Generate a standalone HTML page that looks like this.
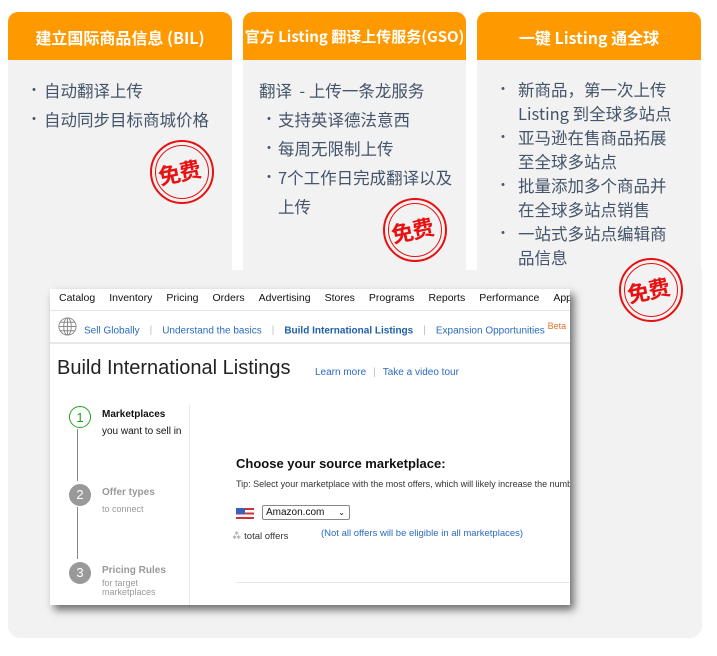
<!DOCTYPE html>
<html><head><meta charset="utf-8"><style>
*{margin:0;padding:0;box-sizing:border-box}
body{width:717px;height:656px;background:#fff;position:relative;overflow:hidden;font-family:"Liberation Sans","Noto Sans CJK SC",sans-serif}
.panel{position:absolute;left:8px;top:270px;width:694px;height:368px;background:#f2f2f2;border-radius:0 0 12px 12px}
.card{position:absolute;top:12px;height:626px;background:#f2f2f2;border-radius:10px 10px 12px 12px;overflow:hidden}
.hd{height:48px;background:#ff9900;color:#fff;font-size:16px;font-weight:bold;text-align:center;line-height:50px;white-space:nowrap;font-family:"Noto Sans CJK SC",sans-serif}
.bd{color:#44546a;font-size:16.5px;line-height:24px;font-family:"Noto Sans CJK SC",sans-serif}
.li{position:relative;padding-left:36px}
.li:before{content:"•";position:absolute;left:19px;font-size:14px}
.stamp{position:absolute;width:64px;height:64px;border:2px solid #e81010;border-radius:50%;}
.stamp:after{content:"";position:absolute;left:3px;top:3px;right:3px;bottom:3px;border:1px solid #e81010;border-radius:50%}
.stamp span{position:absolute;left:6px;top:14px;color:#e81010;font-size:22px;font-weight:bold;transform:rotate(-12deg);font-family:"Noto Sans CJK SC",sans-serif;letter-spacing:-1px}
.shot{position:absolute;left:50px;top:289px;width:520px;height:316px;background:#fff;box-shadow:4px 5px 8px rgba(0,0,0,.55);overflow:hidden;font-size:11px;color:#111}
.nav{height:22px;border-bottom:1px solid #e3e3e3;white-space:nowrap;padding-left:9px;line-height:18px;font-size:10.5px}
.nav span{margin-right:14px}
.sub{height:33px;border-bottom:2px solid #e8e8e8;white-space:nowrap;color:#2b6bc0;font-size:10px;line-height:30px;padding-left:34px;position:relative}
.sep{color:#bbb;margin:0 10px}
a{color:#2b6bc0;text-decoration:none}
.circ{position:absolute;left:19px;width:22px;height:22px;border-radius:50%;text-align:center;line-height:22px;font-size:13px}
</style></head><body>
<div class="panel"></div>
<div class="card" style="left:8px;width:224px">
 <div class="hd">建立国际商品信息 (BIL)</div>
 <div class="bd" style="padding-top:18px">
  <div class="li" style="margin-bottom:5px">自动翻译上传</div>
  <div class="li">自动同步目标商城价格</div>
 </div>
 <div class="stamp" style="left:142px;top:128px"><span>免费</span></div>
</div>
<div class="card" style="left:243px;width:223px">
 <div class="hd" style="font-size:15px">官方 Listing 翻译上传服务(GSO)</div>
 <div class="bd" style="padding-top:16px;line-height:29px">
  <div style="padding-left:16px">翻译&nbsp; - 上传一条龙服务</div>
  <div class="li" style="padding-left:35px">支持英译德法意西</div>
  <div class="li" style="padding-left:35px">每周无限制上传</div>
  <div class="li" style="padding-left:35px;white-space:nowrap">7个工作日完成翻译以及<br>上传</div>
 </div>
 <div class="stamp" style="left:140px;top:186px"><span>免费</span></div>
</div>
<div class="card" style="left:477px;width:224px">
 <div class="hd">一键 Listing 通全球</div>
 <div class="bd" style="padding-top:17px;padding-right:20px">
  <div class="li" style="padding-left:41px">新商品，第一次上传Listing 到全球多站点</div>
  <div class="li" style="padding-left:41px">亚马逊在售商品拓展至全球多站点</div>
  <div class="li" style="padding-left:41px">批量添加多个商品并在全球多站点销售</div>
  <div class="li" style="padding-left:41px">一站式多站点编辑商品信息</div>
 </div>
 <div class="stamp" style="left:142px;top:246px"><span>免费</span></div>
</div>
<div class="shot">
 <div class="nav"><span>Catalog</span><span>Inventory</span><span>Pricing</span><span>Orders</span><span>Advertising</span><span>Stores</span><span>Programs</span><span>Reports</span><span>Performance</span><span>Apps</span></div>
 <div class="sub">
  <svg style="position:absolute;left:8px;top:6px" width="19" height="19" viewBox="0 0 20 20" fill="none" stroke="#888" stroke-width="1"><circle cx="10" cy="10" r="9"/><ellipse cx="10" cy="10" rx="4" ry="9"/><path d="M1 10h18M2.5 5.5h15M2.5 14.5h15M10 1v18"/></svg>
  Sell Globally<span class="sep">|</span>Understand the basics<span class="sep">|</span><b style="color:#1f5faa">Build International Listings</b><span class="sep">|</span>Expansion Opportunities <sup style="color:#d9722a;font-size:9px">Beta</sup><span class="sep">|</span>
 </div>
 <div style="position:absolute;left:7px;top:68px;font-size:20px;color:#222">Build International Listings</div>
 <div style="position:absolute;left:265px;top:78px;font-size:10px"><a>Learn more</a><span class="sep" style="margin:0 7px">|</span><a>Take a video tour</a></div>
 <div style="position:absolute;left:139px;top:116px;width:1px;height:200px;background:#e8e8e8"></div>
 <div class="circ" style="top:117px;border:1.5px solid #1aa81a;color:#1aa81a">1</div>
 <div style="position:absolute;left:27px;top:140px;width:1px;height:52px;background:#888"></div>
 <div class="circ" style="top:195px;background:#999;color:#fff">2</div>
 <div style="position:absolute;left:27px;top:218px;width:1px;height:52px;background:#888"></div>
 <div class="circ" style="top:273px;background:#999;color:#fff">3</div>
 <div style="position:absolute;left:52px;top:117px;font-size:10px;line-height:17px"><b>Marketplaces</b><br>you want to sell in</div>
 <div style="position:absolute;left:52px;top:195px;font-size:10px;line-height:17px;color:#999"><b>Offer types</b><br><span style="font-size:9px">to connect</span></div>
 <div style="position:absolute;left:52px;top:273px;font-size:10px;line-height:17px;color:#999"><b>Pricing Rules</b><br><span style="font-size:9px;line-height:9px;display:block">for target<br>marketplaces</span></div>
 <div style="position:absolute;left:186px;top:167px;font-size:13px;font-weight:bold">Choose your source marketplace:</div>
 <div style="position:absolute;left:186px;top:190px;font-size:9px;white-space:nowrap;color:#333">Tip: Select your marketplace with the most offers, which will likely increase the number</div>
 <div style="position:absolute;left:186px;top:219px;width:18px;height:11px;background:linear-gradient(#c33 0 20%,#fff 20% 40%,#c33 40% 60%,#fff 60% 80%,#c33 80%)"><div style="width:9px;height:6px;background:#3a5fc0"></div></div>
 <div style="position:absolute;left:212px;top:216px;width:88px;height:15px;border:1px solid #888;border-radius:2px;font-size:10px;line-height:13px;padding-left:3px">Amazon.com<span style="position:absolute;right:4px;font-size:8px">⌄</span></div>
 <div style="position:absolute;left:182px;top:239px;font-size:9.5px;color:#333"><span style="color:#777">⁂</span> total offers</div>
 <div style="position:absolute;left:271px;top:239px;font-size:9.5px;color:#2b6bc0">(Not all offers will be eligible in all marketplaces)</div>
 <div style="position:absolute;left:186px;top:293px;width:340px;height:1px;background:#e8e8e8"></div>
</div>
</body></html>
